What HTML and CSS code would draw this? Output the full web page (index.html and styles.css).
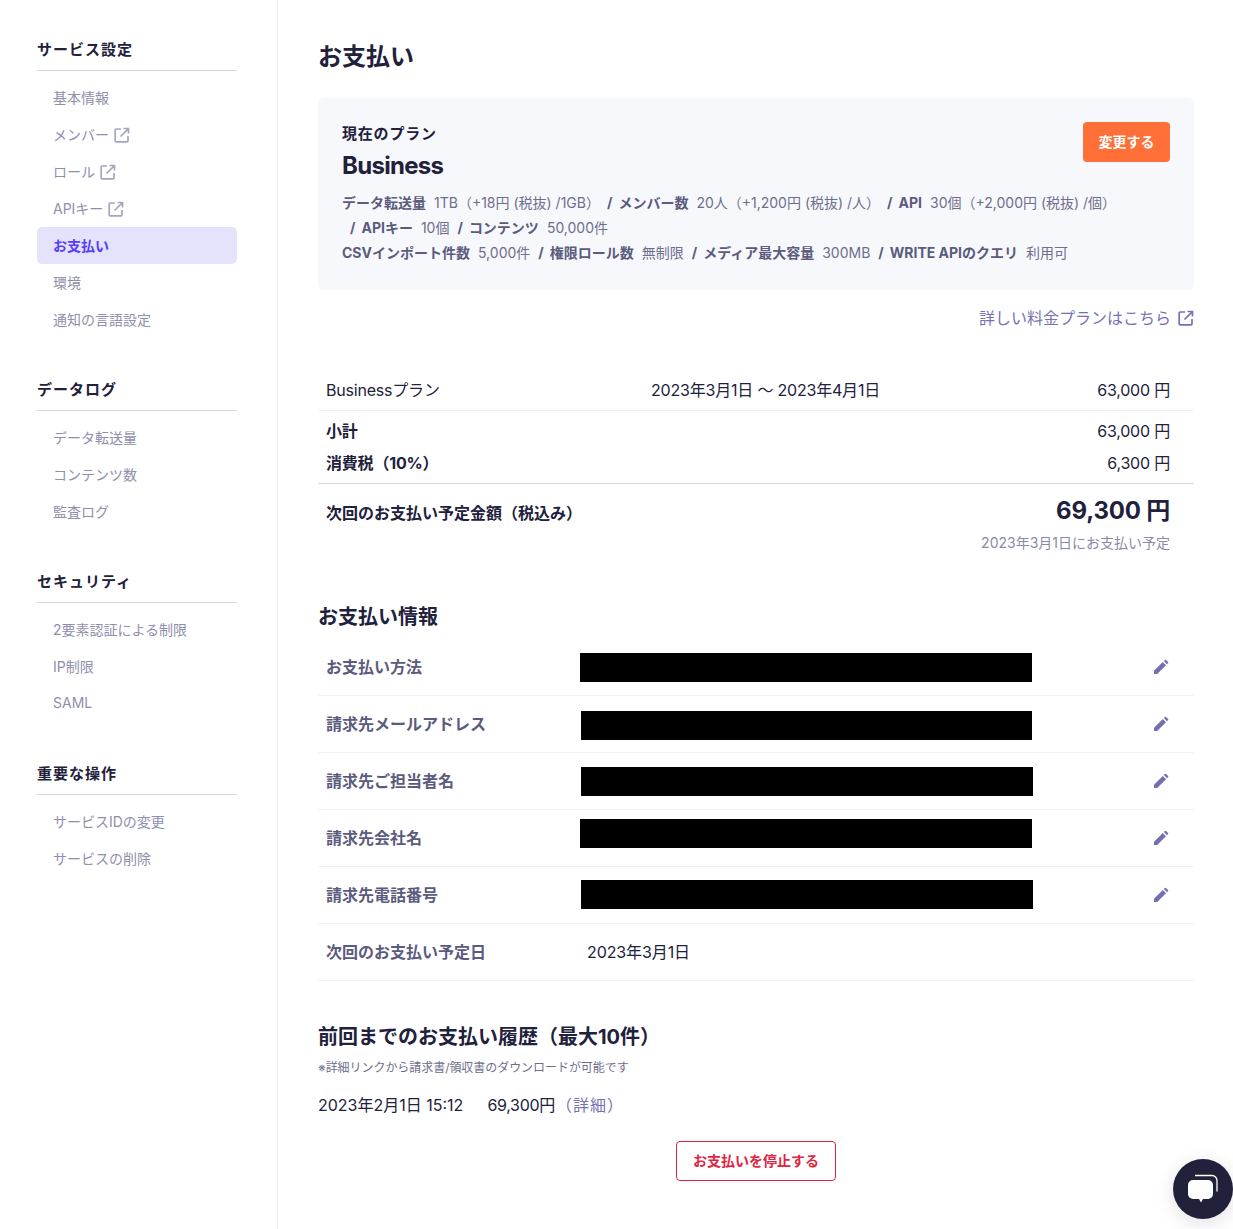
FILE: index.html
```html
<!DOCTYPE html>
<html lang="ja">
<head>
<meta charset="utf-8">
<title>お支払い</title>
<link rel="stylesheet" href="styles.css">
</head>
<body>
<svg class="defs" width="0" height="0" aria-hidden="true">
  <symbol id="ext" viewBox="0 0 16 16"><path d="M7 2H2.200a1 1 0 0 0-1 1v10.800a1 1 0 0 0 1 1H13a1 1 0 0 0 1-1V9M6.500 9.500 14.200 1.800M9.500 1.500h5v5" fill="none" stroke="currentColor" stroke-width="1.700"/></symbol>
  <symbol id="pen" viewBox="0 0 16 16"><path d="M1 15v-3.200L9.800 3l3.200 3.200L4.200 15zM10.800 2l1.100-1.100a.8.800 0 0 1 1.100 0l2.100 2.100a.8.800 0 0 1 0 1.100L14 5.200z" fill="currentColor"/></symbol>
</svg>
<div class="layout">
  <aside class="side">
    <section class="group">
      <h3>サービス設定</h3>
      <a>基本情報</a>
      <a>メンバー<svg class="ext"><use href="#ext"/></svg></a>
      <a>ロール<svg class="ext"><use href="#ext"/></svg></a>
      <a>APIキー<svg class="ext"><use href="#ext"/></svg></a>
      <a class="active">お支払い</a>
      <a>環境</a>
      <a>通知の言語設定</a>
    </section>
    <section class="group">
      <h3>データログ</h3>
      <a>データ転送量</a>
      <a>コンテンツ数</a>
      <a>監査ログ</a>
    </section>
    <section class="group">
      <h3>セキュリティ</h3>
      <a>2要素認証による制限</a>
      <a>IP制限</a>
      <a>SAML</a>
    </section>
    <section class="group">
      <h3>重要な操作</h3>
      <a>サービスIDの変更</a>
      <a>サービスの削除</a>
    </section>
  </aside>
  <main class="main">
    <h1>お支払い</h1>
    <section class="plan">
      <div class="plan-top">
        <div>
          <p class="plan-label">現在のプラン</p>
          <p class="plan-name">Business</p>
        </div>
        <button class="change">変更する</button>
      </div>
      <p class="plan-spec"><b>データ転送量</b>1TB（+18円 (税抜) /1GB）<i class="tight">/</i><b>メンバー数</b>20人（+1,200円 (税抜) /人）<i class="tight">/</i><b>API</b>30個（+2,000円 (税抜) /個）<br><i class="first">/</i><b>APIキー</b>10個<i>/</i><b>コンテンツ</b>50,000件<br><b>CSVインポート件数</b>5,000件<i>/</i><b>権限ロール数</b>無制限<i>/</i><b>メディア最大容量</b>300MB<i>/</i><b>WRITE APIのクエリ</b>利用可</p>
    </section>
    <p class="more"><a>詳しい料金プランはこちら<svg class="ext more-ext"><use href="#ext"/></svg></a></p>

    <div class="bill">
      <div class="bill-row first-row"><span class="b-name">Businessプラン</span><span class="b-period">2023年3月1日 〜 2023年4月1日</span><span class="b-price">63,000 円</span></div>
      <div class="sub">
        <div class="bill-row small"><b>小計</b><span>63,000 円</span></div>
        <div class="bill-row small"><b>消費税（10%）</b><span>6,300 円</span></div>
      </div>
      <div class="total">
        <div class="bill-row total-row"><b>次回のお支払い予定金額（税込み）</b><strong>69,300 円</strong></div>
        <p class="due">2023年3月1日にお支払い予定</p>
      </div>
    </div>

    <h2>お支払い情報</h2>
    <div class="info">
      <div class="info-row"><b>お支払い方法</b><span class="mask m1"></span><svg class="pen"><use href="#pen"/></svg></div>
      <div class="info-row"><b>請求先メールアドレス</b><span class="mask m2"></span><svg class="pen"><use href="#pen"/></svg></div>
      <div class="info-row"><b>請求先ご担当者名</b><span class="mask m3"></span><svg class="pen"><use href="#pen"/></svg></div>
      <div class="info-row"><b>請求先会社名</b><span class="mask m4"></span><svg class="pen"><use href="#pen"/></svg></div>
      <div class="info-row"><b>請求先電話番号</b><span class="mask m5"></span><svg class="pen"><use href="#pen"/></svg></div>
      <div class="info-row"><b>次回のお支払い予定日</b><span class="info-val">2023年3月1日</span></div>
    </div>

    <h2 class="hist">前回までのお支払い履歴（最大10件）</h2>
    <p class="note">※詳細リンクから請求書/領収書のダウンロードが可能です</p>
    <p class="history"><span>2023年2月1日 15:12</span><span>69,300円</span><a>（詳細）</a></p>
    <div class="stop-wrap"><button class="stop">お支払いを停止する</button></div>
  </main>
</div>
<div class="chat">
  <svg width="32" height="32" viewBox="0 0 32 32"><path d="M8 2.500h17a5 5 0 0 1 5 5v11" fill="none" stroke="#fff" stroke-width="1.300"/><path d="M6 7h15a5 5 0 0 1 5 5v9a5 5 0 0 1-5 5h-5l-2 3.500-2-3.500H6a5 5 0 0 1-5-5v-9a5 5 0 0 1 5-5z" fill="#fff"/></svg>
</div>
</body>
</html>
```

FILE: styles.css
```css
* { box-sizing: border-box; }
html, body { margin: 0; padding: 0; }
body {
  font-family: Inter, "Noto Sans CJK JP", sans-serif;
  color: #21213b;
  background: #fff;
  font-size: 16px;
}
p, h1, h2, h3 { margin: 0; }
.defs { position: absolute; }
.layout { display: flex; min-height: 1229px; }

.side {
  width: 278px;
  flex: none;
  padding: 40px 40px 0 37px;
  border-right: 1px solid #f0f0f6;
}
.group { margin-bottom: 42px; }
.group h3 {
  font-size: 15px;
  font-weight: 700;
  line-height: 20px;
  letter-spacing: 1px;
  padding-bottom: 10px;
  border-bottom: 1px solid #d6d6dc;
  margin-bottom: 8px;
  color: #21213b;
}
.group a {
  display: flex;
  align-items: center;
  height: 37px;
  padding: 0 0 2px 16px;
  font-size: 14px;
  color: #8f8fac;
  border-radius: 5px;
}
.group a.active {
  background: #e5e3fb;
  color: #563dff;
  font-weight: 700;
}
.ext { width: 16px; height: 16px; margin-left: 5px; color: #a5a5be; position: relative; top: 1px; }

.main { flex: 1; padding: 41px 39px 0 40px; min-width: 0; }
h1 { font-size: 24px; line-height: 32px; font-weight: 700; margin-bottom: 25px; }

.plan {
  background: #f7f8fc;
  border-radius: 6px;
  padding: 24px;
  height: 192px;
}
.plan-top { display: flex; justify-content: space-between; align-items: flex-start; }
.plan-label { font-size: 15px; font-weight: 700; line-height: 24px; letter-spacing: .8px; }
.plan-name { font-size: 24px; font-weight: 700; line-height: 32px; margin-top: 4px; letter-spacing: -.7px; }
.change {
  width: 87px;
  height: 40px;
  padding: 0 0 2px;
  border: 0;
  border-radius: 4px;
  background: #ff7038;
  color: #fff;
  font: 700 14px Inter, "Noto Sans CJK JP", sans-serif;
}
.plan-spec {
  margin-top: 8px;
  font-size: 14px;
  line-height: 25px;
  color: #6e6e8c;
}
.plan-spec b { color: #5b5b7e; margin-right: 8px; }
.plan-spec i { font-style: normal; font-weight: 700; color: #5b5b7e; margin: 0 6px 0 8px; }
.plan-spec i.tight { margin-left: 7px; }
.plan-spec i.first { margin-left: 8px; }

.more { text-align: right; margin-top: 16px; line-height: 24px; }
.more a { display: inline-flex; align-items: center; color: #7472b4; font-size: 16px; }
.more-ext { margin-left: 7px; color: #7472b4; top: 0; }

.bill { margin-top: 40px; }
.bill-row { display: flex; justify-content: space-between; padding: 0 24px 2px 8px; align-items: center; letter-spacing: -.2px; }
.first-row { height: 41px; border-bottom: 1px solid #f0f0f4; }
.b-name { width: 325px; }
.b-period { flex: 1; }
.sub { padding: 4px 0; border-bottom: 1px solid #d8d8de; }
.small { height: 32px; }
.total { padding-top: 6px; }
.total-row { height: 40px; padding-bottom: 0; letter-spacing: 0; }
.total-row b { padding-top: 4px; }
.total-row strong { font-size: 24px; font-weight: 700; padding-bottom: 4px; letter-spacing: -.2px; }
.due { text-align: right; padding-right: 24px; font-size: 14px; color: #8a8aa6; line-height: 20px; margin-top: 3px; }

h2 { font-size: 20px; line-height: 28px; font-weight: 700; margin-top: 50px; }
.info { margin-top: 8px; }
.info-row {
  display: flex;
  align-items: center;
  height: 57px;
  padding: 0 25px 0 8px;
  border-bottom: 1px solid #f0f0f6;
  color: #5b5b7e;
  position: relative;
}
.info-row b { width: 254px; flex: none; padding-bottom: 2px; }
.mask { width: 452px; height: 29px; background: #000; display: block; }
.m3 { margin-left: 1px; }
.m4 { position: relative; top: -5px; }
.m5 { position: relative; top: -1px; margin-left: 1px; }
.m2 { position: relative; top: 1px; margin-left: 1px; width: 451px; }
.pen { width: 16px; height: 16px; margin-left: auto; color: #7370b0; }
.info-val { color: #21213b; padding: 0 0 2px 7px; letter-spacing: -.1px; }

.hist { margin-top: 42px; }
.note { font-size: 12px; color: #6e6e8c; line-height: 16px; margin-top: 9px; letter-spacing: -.05px; }
.history { margin-top: 17px; line-height: 24px; display: flex; }
.history span { margin-right: 24px; }
.history span + span { margin-right: 0; letter-spacing: -.3px; }
.history a { color: #7472b4; letter-spacing: 1px; margin-left: 1px; }
.stop-wrap { display: flex; justify-content: center; margin-top: 24px; }
.stop {
  width: 160px;
  height: 40px;
  padding: 0 0 2px;
  background: #fff;
  border: 1px solid #e0243f;
  border-radius: 4px;
  color: #e0243f;
  font: 700 14px Inter, "Noto Sans CJK JP", sans-serif;
}

.chat {
  position: fixed;
  left: 1173px;
  top: 1159px;
  width: 60px;
  height: 60px;
  border-radius: 50%;
  background: #21213b;
  display: flex;
  align-items: center;
  justify-content: center;
  box-shadow: 0 4px 20px rgba(0,0,0,.12);
}
```
